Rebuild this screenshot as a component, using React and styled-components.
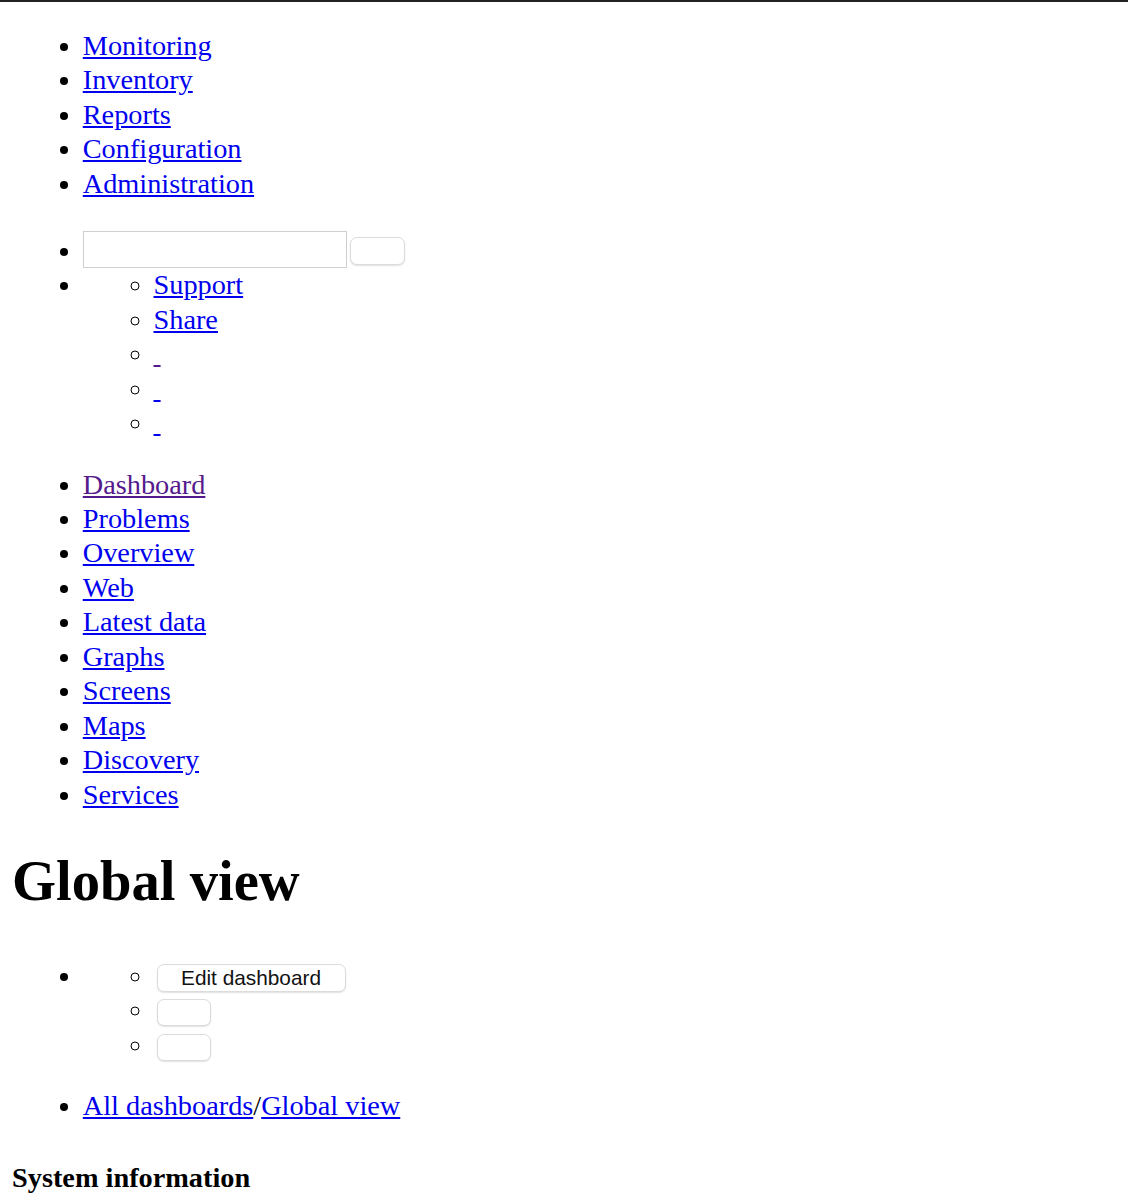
import styled, { createGlobalStyle } from 'styled-components';

const GlobalStyle = createGlobalStyle`
    html {
        font-size: 28.3px;
        background: #fff;
        border-top: 2px solid #222;
    }
    body {
        margin: 0 12px;
        font-family: "Liberation Serif", "Times New Roman", serif;
        line-height: 34.45px;
        color: #000;
    }
`;

const Menu = styled.ul`
    margin: 27px 0;
    padding-left: 2.5em;
    list-style: disc;
`;

const SubMenu = styled.ul`
    margin: 0;
    padding: ${p => (p.$pushed ? '8px' : '0')} 0 0 2.5em;
    list-style: circle;
`;

const Item = styled.li``;

const Link = styled.a`
    color: ${p => (p.$visited ? '#551a8b' : '#0000ee')};
    text-decoration: underline;
    cursor: pointer;
`;

const SearchField = styled.input`
    box-sizing: border-box;
    width: 264px;
    height: 37px;
    margin: 3px 0 0 0;
    padding: 1px 4px;
    border: 1.5px solid #cfcfcf;
    background: #fff;
    vertical-align: bottom;
    font-size: 20px;
`;

const PlainButton = styled.button`
    box-sizing: border-box;
    height: ${p => (p.$wide ? '28px' : '27px')};
    width: ${p => (p.$wide ? '189px' : '54px')};
    margin-left: 3px;
    padding: 0;
    border: 1px solid #dcdcdc;
    border-radius: 7px;
    background: #fff;
    box-shadow: 0 1px 1.5px rgba(0, 0, 0, 0.12);
    font-family: "Liberation Sans", Arial, sans-serif;
    font-size: 20.8px;
    color: #111;
    vertical-align: ${p => (p.$wide ? 'baseline' : 'middle')};
`;

const SearchButton = styled(PlainButton)`
    height: 28px;
    width: 55px;
    margin: 0 0 3px 3px;
    vertical-align: bottom;
`;

const Title = styled.h1`
    font-size: 2em;
    line-height: 63px;
    margin: 0.67em 0;
    font-weight: bold;
`;

const SectionTitle = styled.h4`
    font-size: 1em;
    margin: 1.33em 0;
    font-weight: bold;
`;

const topMenu = ['Monitoring', 'Inventory', 'Reports', 'Configuration', 'Administration'];
const subMenu = ['Dashboard', 'Problems', 'Overview', 'Web', 'Latest data', 'Graphs', 'Screens', 'Maps', 'Discovery', 'Services'];

export default function App() {
    return (
        <>
            <GlobalStyle />
            <Menu>
                {topMenu.map(name => (
                    <Item key={name}><Link href="#">{name}</Link></Item>
                ))}
            </Menu>
            <Menu>
                <Item>
                    <SearchField type="text" aria-label="Search" />
                    <SearchButton type="button" aria-label="Search" />
                </Item>
                <Item>
                    <SubMenu>
                        <Item><Link href="#">Support</Link></Item>
                        <Item><Link href="#">Share</Link></Item>
                        <Item><Link href="#" $visited>{'\u00a0'}</Link></Item>
                        <Item><Link href="#">{'\u00a0'}</Link></Item>
                        <Item><Link href="#">{'\u00a0'}</Link></Item>
                    </SubMenu>
                </Item>
            </Menu>
            <Menu>
                {subMenu.map(name => (
                    <Item key={name}>
                        <Link href="#" $visited={name === 'Dashboard'}>{name}</Link>
                    </Item>
                ))}
            </Menu>
            <Title>Global view</Title>
            <Menu>
                <Item>
                    <SubMenu $pushed>
                        <Item><PlainButton type="button" $wide>Edit dashboard</PlainButton></Item>
                        <Item><PlainButton type="button" aria-label="Actions" /></Item>
                        <Item><PlainButton type="button" aria-label="Kiosk mode" /></Item>
                    </SubMenu>
                </Item>
            </Menu>
            <Menu>
                <Item>
                    <Link href="#">All dashboards</Link>/<Link href="#">Global view</Link>
                </Item>
            </Menu>
            <SectionTitle>System information</SectionTitle>
        </>
    );
}
